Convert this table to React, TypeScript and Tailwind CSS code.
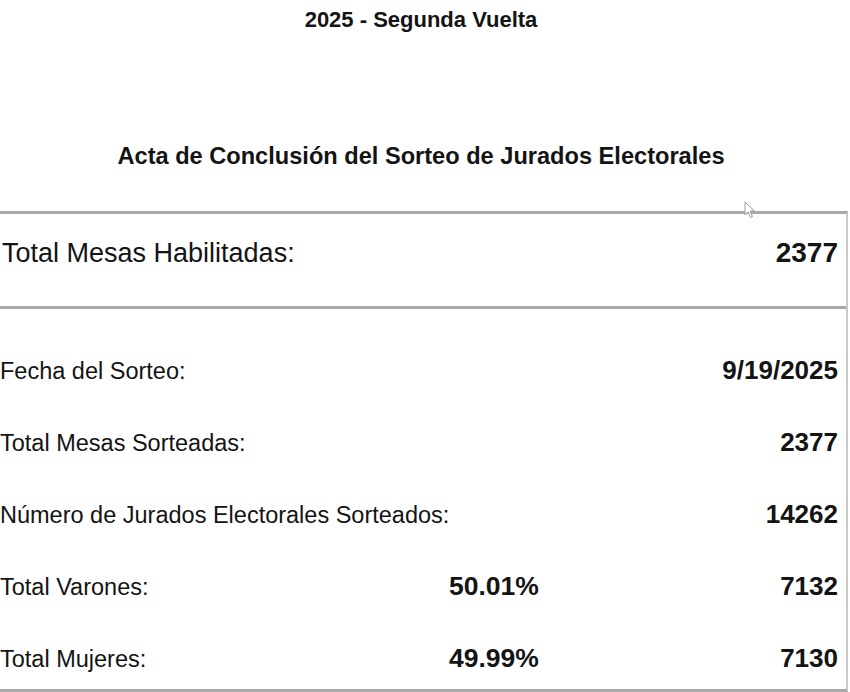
import React from "react";

const rows: { label: string; pct?: string; value: string }[] = [
  { label: "Fecha del Sorteo:", value: "9/19/2025" },
  { label: "Total Mesas Sorteadas:", value: "2377" },
  { label: "Número de Jurados Electorales Sorteados:", value: "14262" },
  { label: "Total Varones:", pct: "50.01%", value: "7132" },
  { label: "Total Mujeres:", pct: "49.99%", value: "7130" },
];

export default function App() {
  return (
    <div
      className="relative w-[850px] h-[692px] overflow-hidden bg-white text-[#141414]"
      style={{ fontFamily: '"Liberation Sans", Arial, sans-serif' }}
    >
      <div className="w-[848px] pr-[6px]">
        <div className="pt-[10px] h-[30px] flex items-center justify-center text-[22px] font-bold leading-none">
          2025 - Segunda Vuelta
        </div>
        <div className="mt-[114px] h-[26px] flex items-center justify-center text-[23.6px] font-bold leading-none">
          Acta de Conclusión del Sorteo de Jurados Electorales
        </div>
      </div>

      <div className="mt-[41px] w-[848px] border-t-[3px] border-[#a9a9a9] border-r-2 border-r-[#c9c9c9] border-b-[3px] border-b-[#a9a9a9]">
        <div className="pt-[21px] pb-[35px] pl-[2px] pr-[8px] flex items-baseline h-[95px] border-b-[3px] border-[#a9a9a9]">
          <span className="text-[27px] leading-[36px] whitespace-nowrap">Total Mesas Habilitadas:</span>
          <span className="ml-auto text-[28px] font-bold leading-[36px]">2377</span>
        </div>
        <div className="pt-[44px] pb-[12px] flex flex-col gap-[36px]">
          {rows.map((r) => (
            <div key={r.label} className="flex items-baseline h-[36px] pt-[2px] pr-[8px]">
              <span className="w-[449px] shrink-0 whitespace-nowrap text-[23.5px] leading-[30px]">{r.label}</span>
              {r.pct && <span className="text-[26.5px] font-bold leading-[30px]">{r.pct}</span>}
              <span className="ml-auto text-[26px] font-bold leading-[30px]">{r.value}</span>
            </div>
          ))}
        </div>
      </div>

      <svg
        className="absolute left-[744px] top-[201px]"
        width="12"
        height="18"
        viewBox="0 0 12 18"
      >
        <path
          d="M1 1 L1 14 L4 11 L6.5 16.5 L8.5 15.5 L6 10 L10.5 10 Z"
          fill="white"
          stroke="#9a9a9a"
          strokeWidth="1"
          strokeLinejoin="round"
        />
      </svg>
    </div>
  );
}
